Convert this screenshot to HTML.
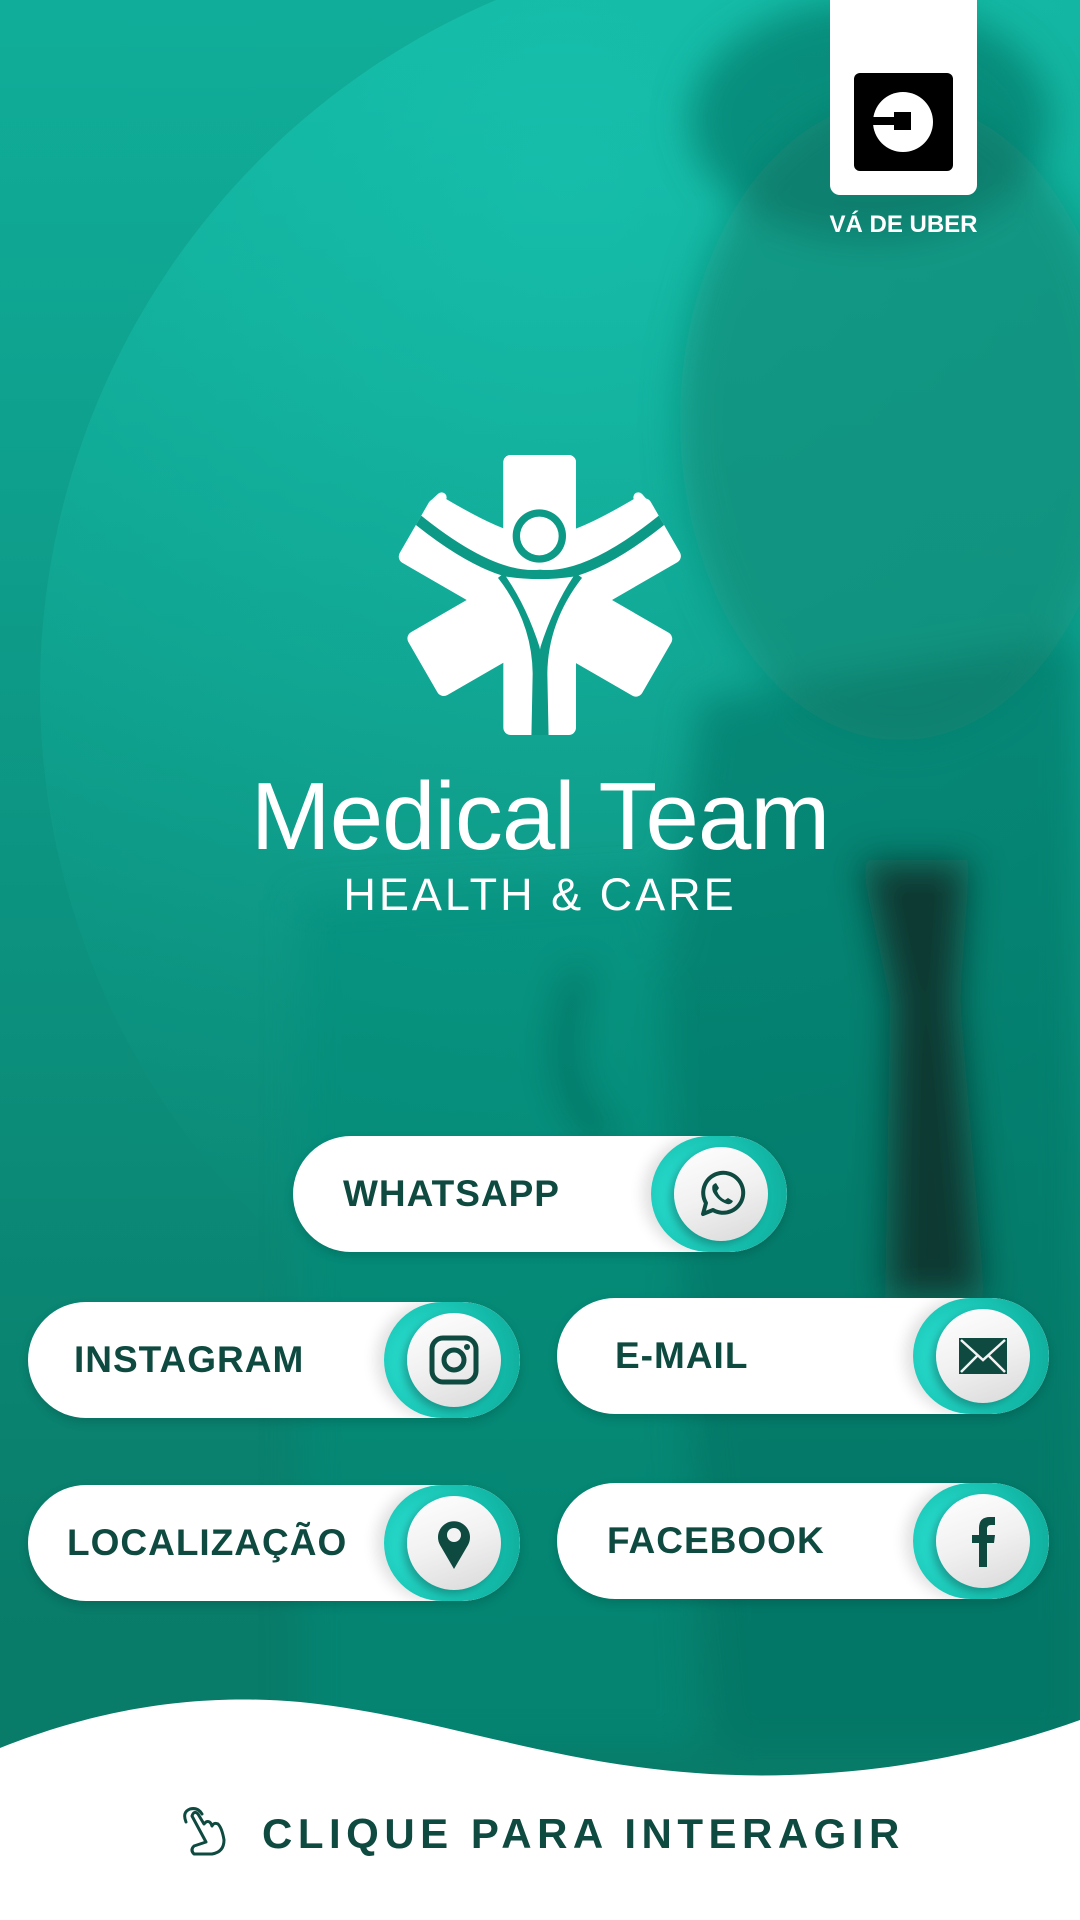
<!DOCTYPE html>
<html><head><meta charset="utf-8"><style>
*{margin:0;padding:0;box-sizing:border-box}
body{width:1080px;height:1920px;overflow:hidden;position:relative;font-family:"Liberation Sans",sans-serif;background:#0b8f7c}
.bg{position:absolute;inset:0;background:linear-gradient(180deg,#10ae9a 0%,#0d9a87 35%,#0b8b78 60%,#097b69 85%);}
.arc{position:absolute;left:40px;top:-60px;width:1500px;height:1500px;border-radius:50%;background:radial-gradient(circle at 35% 15%,rgba(30,215,195,.45),rgba(20,190,170,.1) 55%,rgba(0,0,0,0) 70%)}
.btn{position:absolute;width:492px;height:116px;border-radius:58px;background:#fff;overflow:hidden;box-shadow:0 4px 10px rgba(0,0,0,.15)}
.btn .t{position:absolute;top:0;height:116px;line-height:116px;font-weight:bold;font-size:37px;letter-spacing:1px;color:#0e4a40}
.btn .p{position:absolute;right:0;top:0;width:136px;height:116px;border-radius:58px;background:radial-gradient(circle at 30% 50%,#2ee6d8,#13b9a8 70%,#0fa795);box-shadow:-8px 0 14px rgba(0,0,0,.12)}
.btn .c{position:absolute;right:19px;top:11px;width:94px;height:94px;border-radius:50%;background:linear-gradient(160deg,#fff,#f1f1f1 50%,#d9d9d9);box-shadow:-4px 4px 8px rgba(0,0,0,.25)}
.btn .c svg{position:absolute;left:17px;top:17px;width:60px;height:60px}
</style></head><body>
<div class="bg"></div>
<div class="arc"></div>
<svg style="position:absolute;left:0;top:0" width="1080" height="1920">
<defs><filter id="b"><feGaussianBlur stdDeviation="18"/></filter></defs>
<g filter="url(#b)">
<ellipse cx="900" cy="420" rx="220" ry="320" fill="#0b8a78" opacity=".7"/>
<ellipse cx="870" cy="120" rx="180" ry="120" fill="#0a6f60" opacity=".6"/>
<path d="M700 700 L1080 640 L1080 1750 L720 1750 L660 1000 Z" fill="#0a7565" opacity=".6"/>
<path d="M300 900 L660 880 L700 1750 L300 1750 Z" fill="#0c8d7a" opacity=".5"/>
<path d="M860 860 L970 860 L960 1000 L985 1300 L885 1300 L890 1000 Z" fill="#08332c" opacity=".9"/>
<path d="M580 970 Q540 1090 610 1140" stroke="#0a3f36" stroke-width="16" fill="none" opacity=".6"/>
</g>
</svg>
<div style="position:absolute;left:830px;top:0;width:147px;height:195px;background:#fff;border-radius:0 0 10px 10px"></div>
<div style="position:absolute;left:854px;top:73px;width:99px;height:98px;background:#000;border-radius:6px"></div>
<div style="position:absolute;left:873px;top:92px;width:60px;height:60px;border-radius:50%;background:#fff"></div>
<div style="position:absolute;left:872px;top:117px;width:26px;height:8px;background:#000"></div>
<div style="position:absolute;left:894px;top:112px;width:17px;height:18px;background:#000"></div>
<div style="position:absolute;left:800px;top:211px;width:207px;text-align:center;color:#fff;font-weight:bold;font-size:24px">VÁ DE UBER</div>
<svg style="position:absolute;left:380px;top:440px" width="320" height="320" viewBox="0 0 960 960">
<defs><clipPath id="cl"><rect x="370" y="45" width="218" height="840" rx="22"/><rect x="370" y="45" width="218" height="840" rx="22" transform="rotate(60 480 480)"/><rect x="370" y="45" width="218" height="840" rx="22" transform="rotate(-60 480 480)"/></clipPath></defs>
<g clip-path="url(#cl)">
<rect width="960" height="960" fill="#fff"/>
<path d="M90 220 Q330 420 480 405 Q630 420 870 220" fill="none" stroke="#0c9a86" stroke-width="32"/>
<path d="M365 405 Q470 540 472 700 L468 900" fill="none" stroke="#0c9a86" stroke-width="28"/>
<path d="M595 405 Q490 540 488 700 L492 900" fill="none" stroke="#0c9a86" stroke-width="28"/>
<path d="M378 410 Q480 425 580 410 Q520 500 480 625 Q440 500 378 410Z" fill="#fff"/>
</g>
<path d="M150 200 Q330 385 480 382 Q630 385 805 200 L770 172 Q630 255 560 275 L400 275 Q330 255 190 172 Z" fill="#fff"/>
<path d="M160 195 L185 172" stroke="#fff" stroke-width="30" stroke-linecap="round"/>
<path d="M795 195 L775 172" stroke="#fff" stroke-width="30" stroke-linecap="round"/>
<rect x="370" y="45" width="218" height="240" rx="22" fill="#fff"/>
<circle cx="478" cy="288" r="80" fill="#0c9a86"/>
<circle cx="478" cy="288" r="58" fill="#fff"/>
</svg>
<div style="position:absolute;left:0;width:1080px;top:762px;text-align:center;color:#fff;font-size:96px;line-height:110px;letter-spacing:-1px">Medical Team</div>
<div style="position:absolute;left:0;width:1080px;top:870px;text-align:center;color:#fff;font-size:45px;line-height:50px;letter-spacing:3px">HEALTH &amp; CARE</div>

<div class="btn" style="left:293px;top:1136px;width:494px"><div class="t" style="left:50px">WHATSAPP</div><div class="p"></div><div class="c"><svg viewBox="0 0 60 60"><path d="M12 50 L15 39 A20 20 0 1 1 22 46 Z" fill="none" stroke="#0e4a40" stroke-width="4" stroke-linejoin="round"/><path d="M23 20 Q20 22 22 28 Q27 37 36 40 Q40 41 42 37 L37 34 L34 36 Q28 33 26 27 L28 24 L25 19Z" fill="#0e4a40"/></svg></div></div>

<div class="btn" style="left:28px;top:1302px"><div class="t" style="left:46px">INSTAGRAM</div><div class="p"></div><div class="c"><svg viewBox="0 0 60 60"><rect x="8" y="8" width="44" height="44" rx="11" fill="none" stroke="#0e4a40" stroke-width="5"/><circle cx="30" cy="30" r="10" fill="none" stroke="#0e4a40" stroke-width="5"/><circle cx="43" cy="17" r="3" fill="#0e4a40"/></svg></div></div>

<div class="btn" style="left:557px;top:1298px"><div class="t" style="left:58px">E-MAIL</div><div class="p"></div><div class="c"><svg viewBox="0 0 60 60"><rect x="6" y="12" width="48" height="36" fill="#0e4a40"/><path d="M8 14 L30 34 L52 14 M8 46 L24 30 M52 46 L36 30" stroke="#f3f3f3" stroke-width="2.5" fill="none"/></svg></div></div>

<div class="btn" style="left:28px;top:1485px"><div class="t" style="left:39px">LOCALIZAÇÃO</div><div class="p"></div><div class="c"><svg viewBox="0 0 60 60"><path d="M30 56 L16 32 A16 16 0 1 1 44 32 Z" fill="#0e4a40"/><circle cx="30" cy="22" r="7" fill="#f3f3f3"/></svg></div></div>

<div class="btn" style="left:557px;top:1483px"><div class="t" style="left:50px">FACEBOOK</div><div class="p"></div><div class="c"><svg viewBox="0 0 60 60"><path d="M26 56 V32 H19 V24 H26 V17 Q26 6 37 6 H42 V14 H38 Q34 14 34 18 V24 H42 L41 32 H34 V56 Z" fill="#0e4a40"/></svg></div></div>

<svg style="position:absolute;left:0;top:1680px" width="1080" height="240"><path d="M0 68 C120 20 220 15 300 22 C480 40 620 120 880 88 C960 78 1030 58 1080 40 L1080 240 L0 240Z" fill="#fff"/></svg>
<svg style="position:absolute;left:178px;top:1806px" width="62" height="56" viewBox="0 0 62 56"><g fill="none" stroke="#0e4a40" stroke-width="3" stroke-linejoin="round" stroke-linecap="round"><path d="M14 10 L28 36 L16 40 Q12 44 16 48 L34 48 Q46 46 46 34 Q44 22 40 18 Q36 16 34 20 Q32 14 28 16 L26 18 L20 8 Q16 4 14 10Z"/><path d="M8 16 Q4 6 12 3 Q20 1 24 8"/></g></svg>
<div style="position:absolute;left:262px;top:1810px;color:#0e4a40;font-weight:bold;font-size:42px;letter-spacing:5.5px;line-height:48px">CLIQUE PARA INTERAGIR</div>
</body></html>
